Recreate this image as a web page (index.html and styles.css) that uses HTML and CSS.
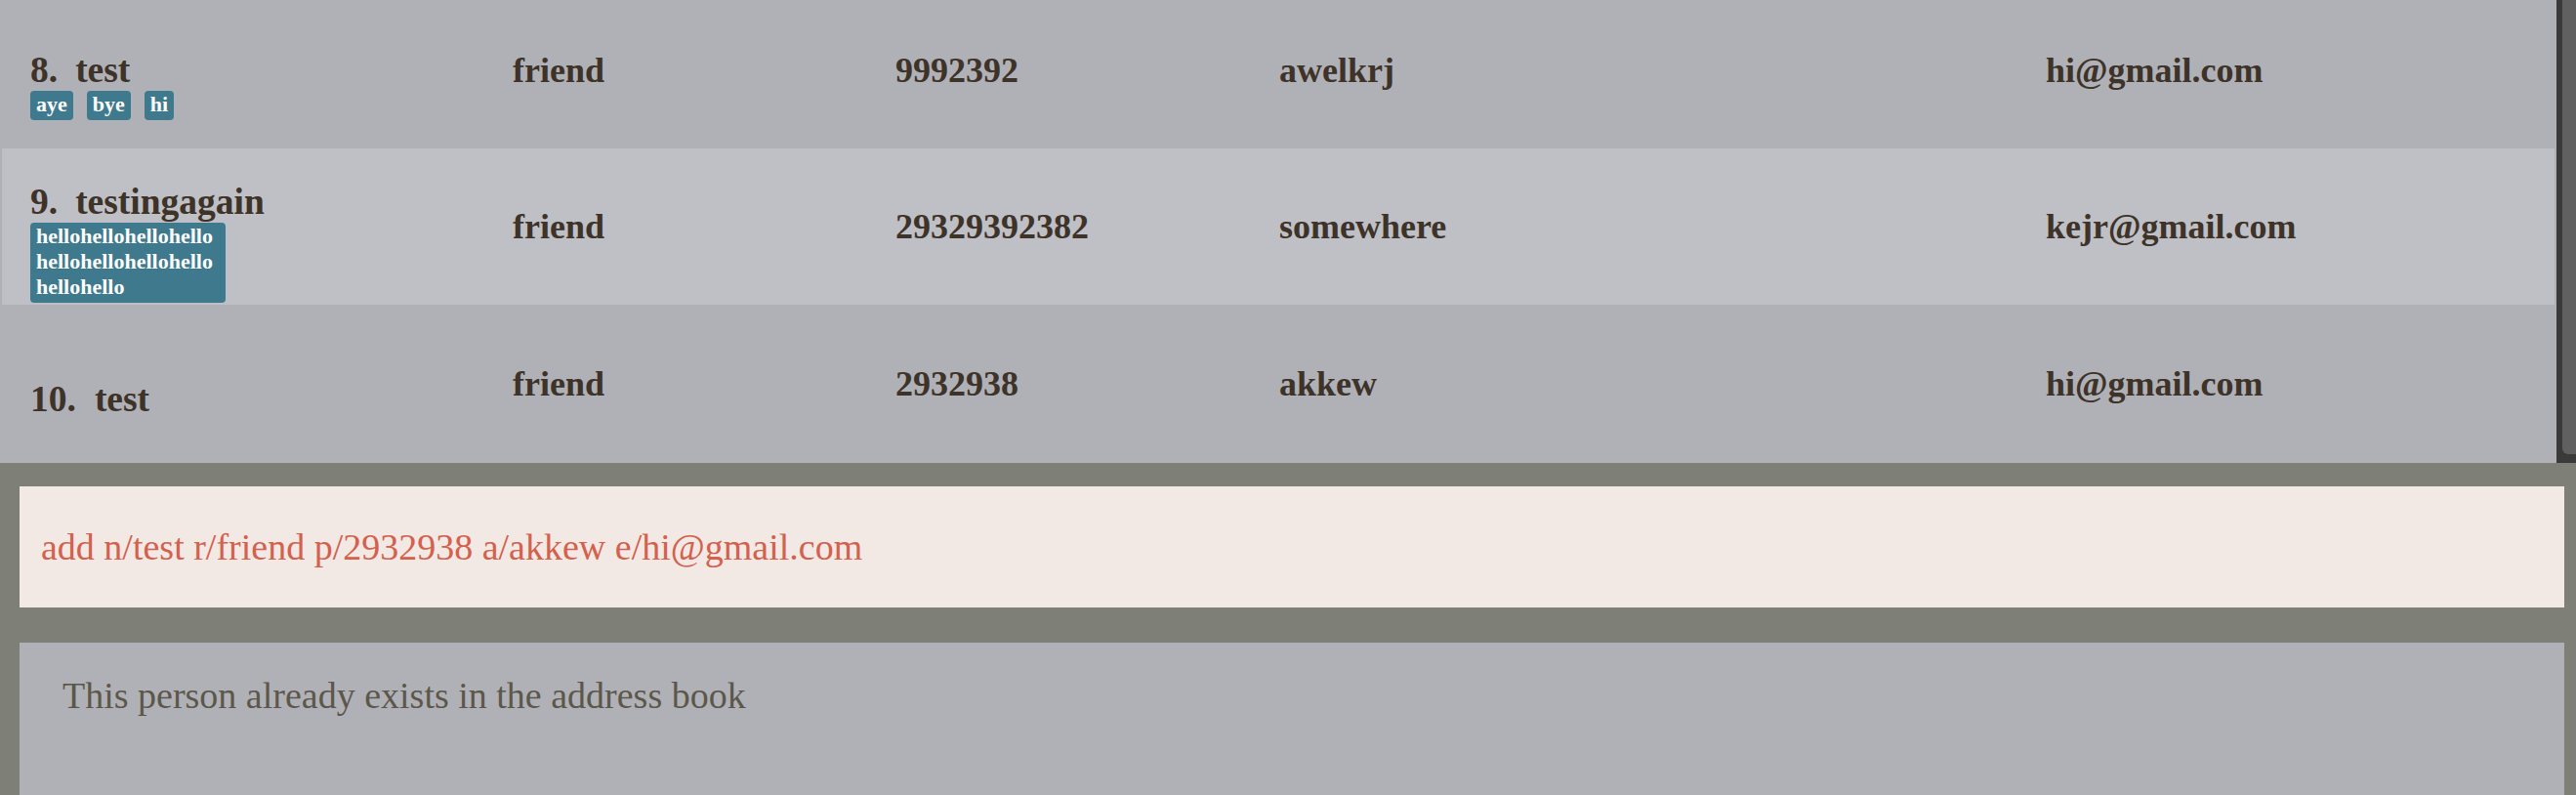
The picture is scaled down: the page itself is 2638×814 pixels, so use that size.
FILE: index.html
```html
<!DOCTYPE html>
<html lang="en">
<head>
<meta charset="utf-8">
<title>Address Book</title>
<link rel="stylesheet" href="styles.css">
</head>
<body>
<div class="list-wrap">
  <div class="list">
    <div class="row row-first">
      <div class="name-cell">
        <div class="name"><span class="idx">8.</span>test</div>
        <div class="tags"><span class="tag">aye</span><span class="tag">bye</span><span class="tag">hi</span></div>
      </div>
      <div class="cell">friend</div>
      <div class="cell">9992392</div>
      <div class="cell">awelkrj</div>
      <div class="cell">hi@gmail.com</div>
    </div>
    <div class="row row-alt">
      <div class="name-cell">
        <div class="name"><span class="idx">9.</span>testingagain</div>
        <div class="tags"><span class="tag tag-long">hellohellohellohellohellohellohellohellohellohello</span></div>
      </div>
      <div class="cell">friend</div>
      <div class="cell">29329392382</div>
      <div class="cell">somewhere</div>
      <div class="cell">kejr@gmail.com</div>
    </div>
    <div class="row row-last">
      <div class="name-cell">
        <div class="name"><span class="idx idx-wide">10.</span>test</div>
      </div>
      <div class="cell">friend</div>
      <div class="cell">2932938</div>
      <div class="cell">akkew</div>
      <div class="cell">hi@gmail.com</div>
    </div>
  </div>
  <div class="scrollbar"><div class="thumb"></div></div>
</div>
<div class="command">add n/test r/friend p/2932938 a/akkew e/hi@gmail.com</div>
<div class="result">This person already exists in the address book</div>
</body>
</html>
```
FILE: styles.css
```css
html, body {
  margin: 0;
  padding: 0;
}
body {
  background: #7e7f76;
  font-family: "Liberation Serif", "Times New Roman", serif;
  height: 814px;
  overflow: hidden;
}
.list-wrap {
  display: flex;
  height: 474px;
}
.list {
  flex: 1;
  background: #b0b1b6;
  padding: 0 2px;
  overflow: hidden;
}
.scrollbar {
  width: 14px;
  padding-left: 6px;
  background: #3a3a3a;
}
.thumb {
  height: 465px;
  background: #606060;
  border-bottom-left-radius: 6px;
}
.row {
  display: grid;
  grid-template-columns: 494px 392px 393px 785px 1fr;
  align-items: center;
  padding-left: 29px;
  color: #3d3329;
  font-size: 36px;
  font-weight: bold;
}
.row-first {
  height: 161px;
  margin-top: -9px;
}
.row-alt {
  height: 160px;
  background: #bfc0c5;
}
.row-last {
  height: 162px;
}
.name-cell {
  padding-top: 31px;
}
.name {
  white-space: nowrap;
  font-size: 37.5px;
  line-height: 41px;
}
.idx {
  display: inline-block;
  margin-right: 18px;
}
.idx-wide {
  margin-right: 19px;
}
.tags {
  display: flex;
  flex-wrap: wrap;
  gap: 14px;
  align-items: flex-start;
  margin-top: 1px;
}
.tag {
  display: inline-block;
  background: #3e798e;
  color: #ffffff;
  font-size: 22px;
  font-weight: bold;
  line-height: 26px;
  padding: 1px 6px 3px;
  border-radius: 4px;
  max-width: 188px;
  word-break: break-all;
}
.cell {
  white-space: nowrap;
}
.command {
  margin: 24px 12px 0 20px;
  height: 124px;
  background: #f2e9e4;
  color: #d4604e;
  font-size: 38px;
  display: flex;
  align-items: center;
  padding-left: 22px;
}
.result {
  box-sizing: border-box;
  margin: 36px 12px 0 20px;
  height: 156px;
  padding: 32px 44px 0;
  background: #b0b1b6;
  color: #5c574b;
  font-size: 38px;
}
```
